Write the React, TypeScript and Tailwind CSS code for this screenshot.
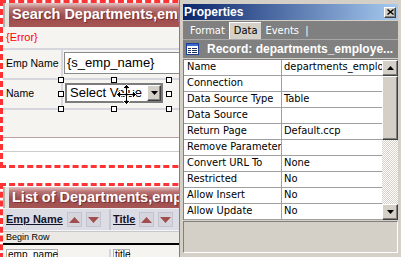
const redBar =
  "bg-[linear-gradient(to_bottom,#e4c6c6_0%,#ba7474_22%,#9e4a4a_58%,#a65656_100%)]";
const bevel =
  "border border-t-white border-l-white border-b-[#404040] border-r-[#404040] shadow-[inset_-1px_-1px_0_#808080]";

function FormTitle({ text, height }: { text: string; height: string }) {
  return (
    <div className={`flex shrink-0 ${height}`}>
      <div className="w-[6px] shrink-0 bg-[#e6e3de] border-l-2 border-[#b4b0aa]" />
      <div
        className={`flex-1 flex items-center pl-[3px] text-white font-bold text-[14.5px] whitespace-nowrap [text-shadow:1px_1px_0_#7a3434] ${redBar}`}
      >
        {text}
      </div>
    </div>
  );
}

function Handle({ pos }: { pos: string }) {
  return <div className={`absolute w-[6px] h-[6px] bg-white border border-black ${pos}`} />;
}

function MoveCursor() {
  return (
    <svg className="absolute left-[49px] top-[-1px]" width="21" height="21" viewBox="-0.5 -0.5 21 21">
      <path
        d="M10 0 L14 4 L11 4 L11 9 L16 9 L16 6 L20 10 L16 14 L16 11 L11 11 L11 16 L14 16 L10 20 L6 16 L9 16 L9 11 L4 11 L4 14 L0 10 L4 6 L4 9 L9 9 L9 4 L6 4 Z"
        fill="#000"
        stroke="#fff"
        strokeWidth="1"
      />
    </svg>
  );
}

function SortButtons() {
  return (
    <div className="flex gap-[4px]">
      <div className="w-[15px] h-[15px] bg-[#d6d4dc] border border-[#c4c2cc] flex items-center justify-center">
        <svg width="11" height="6" viewBox="0 0 11 6">
          <polygon points="5.5,0 11,6 0,6" fill="#a24e4e" />
        </svg>
      </div>
      <div className="w-[15px] h-[15px] bg-[#d6d4dc] border border-[#c4c2cc] flex items-center justify-center">
        <svg width="11" height="6" viewBox="0 0 11 6">
          <polygon points="0,0 11,0 5.5,6" fill="#a24e4e" />
        </svg>
      </div>
    </div>
  );
}

function DesignArea() {
  return (
    <div className="w-[179px] shrink-0 overflow-hidden flex flex-col text-[10.5px] text-black">
      {/* Search form */}
      <div className="w-[260px] shrink-0 border-[3px] border-r-0 border-dashed border-[#ff3333] flex flex-col">
        <FormTitle text="Search Departments,employees" height="h-[24px]" />
        <div className="h-[21px] bg-[#f6f4f0] flex items-center pl-[3px] text-[#ff0000] text-[11px]">{"{Error}"}</div>
        <div className="h-[2px] bg-[#d6d6de]" />
        <div className="h-[28px] bg-[#f6f4f0] flex">
          <div className="w-[58px] flex items-center pl-[3px]">Emp Name</div>
          <div className="w-[2px] bg-[#d6d6de]" />
          <div className="flex-1 pt-[2px] pl-[1px]">
            <div className="h-[22px] bg-white border border-[#8a8a8a] flex items-center pl-[2px] text-[13px]">
              {"{s_emp_name}"}
            </div>
          </div>
        </div>
        <div className="h-[2px] bg-[#d6d6de]" />
        <div className="h-[28px] bg-[#f6f4f0] flex">
          <div className="w-[58px] flex items-center pl-[3px]">Name</div>
          <div className="w-[2px] bg-[#d6d6de]" />
          <div className="flex-1 pt-[3px] pl-[2px]">
            <div className="relative w-[98px] h-[20px] bg-white border-2 border-[#7c7c7c] flex items-center">
              <span className="flex-1 pl-[3px] text-[13px] whitespace-nowrap">Select Value</span>
              <div className={`w-[14px] h-[16px] bg-[#d4d0c8] flex items-center justify-center ${bevel}`}>
                <svg width="7" height="4" viewBox="0 0 7 4">
                  <polygon points="0,0 7,0 3.5,4" fill="#000" />
                </svg>
              </div>
              <Handle pos="left-[-9px] top-[-8px]" />
              <Handle pos="left-[44px] top-[-8px]" />
              <Handle pos="left-[99px] top-[-8px]" />
              <Handle pos="left-[-9px] top-[6px]" />
              <Handle pos="left-[99px] top-[6px]" />
              <Handle pos="left-[-9px] top-[21px]" />
              <Handle pos="left-[44px] top-[21px]" />
              <Handle pos="left-[99px] top-[21px]" />
              <MoveCursor />
            </div>
          </div>
        </div>
        <div className="h-[2px] bg-[#d6d6de]" />
        <div className="h-[27px] bg-[#f6f4f0]" />
        <div className="h-[1px] bg-[#b8a4a4]" />
        <div className="h-[13px] bg-white" />
        <div className="h-[1px] bg-[#cccccc]" />
        <div className="h-[13px] bg-white" />
      </div>

      {/* List form */}
      <div className="w-[260px] mt-[15px] shrink-0 border-[3px] border-r-0 border-b-0 border-dashed border-[#ff3333] flex flex-col pt-[1px]">
        <FormTitle text="List of Departments,employees" height="h-[21px]" />
        <div className="h-[1px] bg-[#f0eef0]" />
        <div className="h-[21px] bg-[#dcdce4] flex items-center">
          <div className="w-[106px] flex items-center pl-[3px] gap-[4px]">
            <span className="font-bold text-[11px] underline text-[#14142a]">Emp Name</span>
            <SortButtons />
          </div>
          <div className="w-[2px] self-stretch bg-[#c6c6d0]" />
          <div className="flex items-center pl-[2px] gap-[4px]">
            <span className="font-bold text-[11px] underline text-[#14142a]">Title</span>
            <SortButtons />
          </div>
        </div>
        <div className="h-[1px] bg-[#f4f4f8]" />
        <div className="h-[12px] bg-[#ebe9e5] border-t border-[#c8c8c8] flex items-center pl-[3px] text-[9px]">Begin Row</div>
        <div className="h-[2px] bg-black" />
        <div className="h-[14px] bg-[#f6f4f0] flex pt-[4px]">
          <div className="w-[106px] pl-[3px]">
            <div className="w-[52px] h-[12px] bg-white border border-[#b0b0b0] text-[10px] leading-[10px] pl-[1px]">emp_name</div>
          </div>
          <div className="w-[2px] bg-[#d6d6de]" />
          <div className="pl-[2px]">
            <div className="w-[17px] h-[12px] bg-white border border-[#b0b0b0] text-[10px] leading-[10px] pl-[1px]">title</div>
          </div>
        </div>
      </div>
    </div>
  );
}

const rows: [string, string][] = [
  ["Name", "departments_employees"],
  ["Connection", ""],
  ["Data Source Type", "Table"],
  ["Data Source", ""],
  ["Return Page", "Default.ccp"],
  ["Remove Parameters", ""],
  ["Convert URL To", "None"],
  ["Restricted", "No"],
  ["Allow Insert", "No"],
  ["Allow Update", "No"],
];

function RecordIcon() {
  return (
    <svg width="13" height="12" viewBox="0 0 13 12">
      <rect x="0.5" y="0.5" width="12" height="11" fill="#fff" stroke="#1d3f96" />
      <rect x="1" y="1" width="11" height="2" fill="#3a6ad0" />
      <rect x="2" y="5" width="3" height="1" fill="#203060" />
      <rect x="6" y="5" width="5" height="1" fill="#203060" />
      <rect x="2" y="7" width="3" height="1" fill="#203060" />
      <rect x="6" y="7" width="5" height="1" fill="#203060" />
      <rect x="2" y="9" width="3" height="1" fill="#203060" />
      <rect x="6" y="9" width="5" height="1" fill="#203060" />
    </svg>
  );
}

function PropertiesPanel() {
  return (
    <div className="w-[222px] shrink-0 bg-[#d4d0c8] border-l border-[#808080] px-[3px] pt-[4px] flex flex-col font-['DejaVu_Sans_Condensed','Liberation_Sans',sans-serif]">
      <div className="h-[16px] flex items-center bg-[linear-gradient(to_right,#0a246a,#a6caf0)] pl-[1px] pr-[2px]">
        <span className="flex-1 text-white font-bold text-[12px] font-['Liberation_Sans',sans-serif]">Properties</span>
        <div className={`w-[12px] h-[11px] bg-[#d4d0c8] flex items-center justify-center ${bevel}`}>
          <svg width="7" height="6" viewBox="0 0 7 6">
            <path d="M0.5 0.5 L6.5 5.5 M6.5 0.5 L0.5 5.5" stroke="#000" strokeWidth="1.4" />
          </svg>
        </div>
      </div>
      <div className="h-[19px] mt-[1px] bg-[#808080] flex items-end pl-[4px] text-[11px] border-b border-[#a8a8a8]">
        <div className="h-[16px] px-[3px] flex items-center text-white">Format</div>
        <div className="h-[17px] px-[4px] ml-[1px] flex items-center bg-[#d4d0c8] text-black border-t border-l border-white">Data</div>
        <div className="h-[16px] px-[4px] flex items-center text-white">Events&nbsp;&nbsp;|</div>
      </div>
      <div className="h-[18px] bg-[#808080] flex items-center pl-[3px] gap-[8px] overflow-hidden">
        <RecordIcon />
        <span className="text-white font-bold text-[12px] whitespace-nowrap font-['Liberation_Sans',sans-serif]">
          Record: departments_employe...
        </span>
      </div>
      <div className="h-[161px] mt-[1px] flex border-t border-[#808080] text-[11px] text-black">
        <div className="w-[199px] border-l border-[#808080] flex flex-col bg-white">
          {rows.map(([k, v]) => (
            <div key={k} className="h-[16px] flex border-b border-[#a0a0a0]">
              <div className="w-[98px] shrink-0 border-r border-[#a0a0a0] pl-[3px] flex items-center whitespace-nowrap overflow-hidden">
                {k}
              </div>
              <div className="flex-1 pl-[2px] flex items-center whitespace-nowrap overflow-hidden">{v}</div>
            </div>
          ))}
        </div>
        <div className="w-[16px] flex flex-col">
          <div className={`h-[16px] bg-[#d4d0c8] flex items-center justify-center ${bevel}`}>
            <svg width="7" height="4" viewBox="0 0 7 4">
              <polygon points="3.5,0 7,4 0,4" fill="#000" />
            </svg>
          </div>
          <div className={`h-[64px] bg-[#d4d0c8] ${bevel}`} />
          <div className="flex-1 bg-[repeating-conic-gradient(#d4d0c8_0%_25%,#ffffff_0%_50%)] bg-[length:2px_2px]" />
          <div className={`h-[16px] bg-[#d4d0c8] flex items-center justify-center ${bevel}`}>
            <svg width="7" height="4" viewBox="0 0 7 4">
              <polygon points="0,0 7,0 3.5,4" fill="#000" />
            </svg>
          </div>
        </div>
      </div>
      <div className="h-[32px] mt-[1px] bg-[#d4d0c8] border border-t-[#808080] border-l-[#808080] border-b-white border-r-white" />
    </div>
  );
}

export default function App() {
  return (
    <div className="w-[401px] h-[257px] bg-white flex overflow-hidden font-['Liberation_Sans',sans-serif]">
      <DesignArea />
      <PropertiesPanel />
    </div>
  );
}
